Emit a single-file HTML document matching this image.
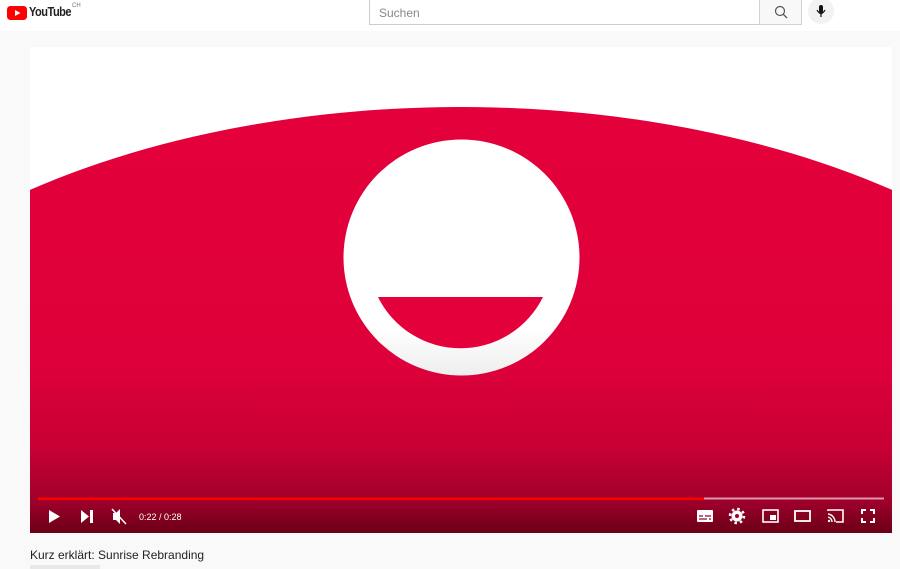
<!DOCTYPE html>
<html><head><meta charset="utf-8"><style>
*{margin:0;padding:0;box-sizing:border-box}
html,body{width:900px;height:569px;overflow:hidden}
body{background:#f9f9f9;font-family:"Liberation Sans",sans-serif;position:relative}
.hdr{position:absolute;left:0;top:0;width:900px;height:31px;background:#fff}
.search{position:absolute;left:369px;top:-2px;width:391px;height:27px;border:1px solid #ccc;background:#fff;font-size:12px;color:#888;padding:7px 0 0 9px}
.sbtn{position:absolute;left:759px;top:-2px;width:43px;height:27px;border:1px solid #d3d3d3;background:#f8f8f8}
.mic{position:absolute;left:808px;top:-2px;width:26px;height:26px;border-radius:50%;background:#f2f2f2}
.title{position:absolute;left:30px;top:548px;font-size:12px;color:#222}
.under{position:absolute;left:30px;top:565px;width:70px;height:4px;background:#e8e8e8}
</style></head><body>
<div class="hdr">
<svg style="position:absolute;left:7px;top:6px" width="20" height="14"><rect width="20" height="14" rx="3.5" fill="#f00"/><path d="M8 4 L13.5 7 L8 10Z" fill="#fff"/></svg>
<div style="position:absolute;left:29px;top:4px;font-size:13px;font-weight:bold;letter-spacing:-0.6px;color:#222;transform:scaleX(.85);transform-origin:left">YouTube</div>
<div style="position:absolute;left:72px;top:3px;font-size:6px;color:#777">CH</div>
<div class="search">Suchen</div>
<div class="sbtn"><svg width="43" height="27"><circle cx="20" cy="12" r="4.5" fill="none" stroke="#555" stroke-width="1.2"/><path d="M23.3 15.3 L27 19" stroke="#555" stroke-width="1.3"/></svg></div>
<div class="mic"><svg width="26" height="26"><rect x="11" y="7" width="4" height="8" rx="2" fill="#111"/><path d="M9 12 Q13 19 17 12 M13 16 V19" stroke="#111" stroke-width="1.2" fill="none"/></svg></div>
</div>
<svg style="position:absolute;left:30px;top:47px" width="862" height="486" viewBox="30 47 862 486">
<defs><linearGradient id="g" gradientUnits="userSpaceOnUse" x1="0" y1="107" x2="0" y2="533"><stop offset="0" stop-color="#e4003b"/><stop offset="0.6" stop-color="#de003a"/><stop offset="0.8" stop-color="#c70034"/><stop offset="0.92" stop-color="#a3002c"/><stop offset="1" stop-color="#6a0018"/></linearGradient>
<linearGradient id="w" x1="0" y1="0" x2="0" y2="1"><stop offset=".8" stop-color="#fff"/><stop offset="1" stop-color="#eee"/></linearGradient></defs>
<rect x="30" y="47" width="862" height="486" fill="#fff"/>
<ellipse cx="461" cy="498" rx="700" ry="391" fill="url(#g)"/>
<circle cx="461.5" cy="257.5" r="118" fill="url(#w)"/>
<path d="M378 297 A92 92 0 0 0 543 297 Z" fill="#e4003b"/>
<rect x="38" y="497.5" width="846" height="2" fill="rgba(255,255,255,.6)"/>
<rect x="38" y="497.5" width="666" height="2.5" fill="#f00"/>
<path d="M49 510 L60 516.5 L49 523Z" fill="#fff"/>
<path d="M81 510 L89 516.5 L81 523Z M90 510 H93 V523 H90Z" fill="#fff"/>
<path d="M113 513 H116 L120 509 V524 L116 520 H113Z" fill="#fff"/><path d="M112 509 L126 524" stroke="#fff" stroke-width="1.5"/>
<text x="139" y="520" font-size="9" fill="#fff" font-family="Liberation Sans">0:22 / 0:28</text>
<rect x="697" y="510" width="16" height="12" rx="1" fill="#fff"/><path d="M699 516 H703 M705 516 H711 M699 519 H707 M709 519 H711" stroke="#a00028" stroke-width="1.3"/>
<circle cx="737" cy="516" r="5.5" fill="#fff"/><circle cx="737" cy="516" r="7" fill="none" stroke="#fff" stroke-width="2.5" stroke-dasharray="2.5 3"/><circle cx="737" cy="516" r="2" fill="#9a0028"/>
<rect x="763" y="510" width="15" height="12" fill="none" stroke="#fff" stroke-width="1.6"/><rect x="770" y="515" width="6" height="5" fill="#fff"/>
<rect x="795" y="511" width="15" height="10" fill="none" stroke="#fff" stroke-width="1.8"/>
<path d="M828 511 V510 H843 V522 H836" fill="none" stroke="#fff" stroke-width="1.6"/><path d="M828 514 A8 8 0 0 1 835 522 M828 517 A5 5 0 0 1 832 522" fill="none" stroke="#fff" stroke-width="1.4"/><circle cx="829" cy="521" r="1.2" fill="#fff"/>
<path d="M862 514 V510 H866 M870 510 H874 V514 M874 518 V522 H870 M866 522 H862 V518" fill="none" stroke="#fff" stroke-width="2"/>
</svg>
<div class="title">Kurz erklärt: Sunrise Rebranding</div>
<div class="under"></div>
</body></html>
